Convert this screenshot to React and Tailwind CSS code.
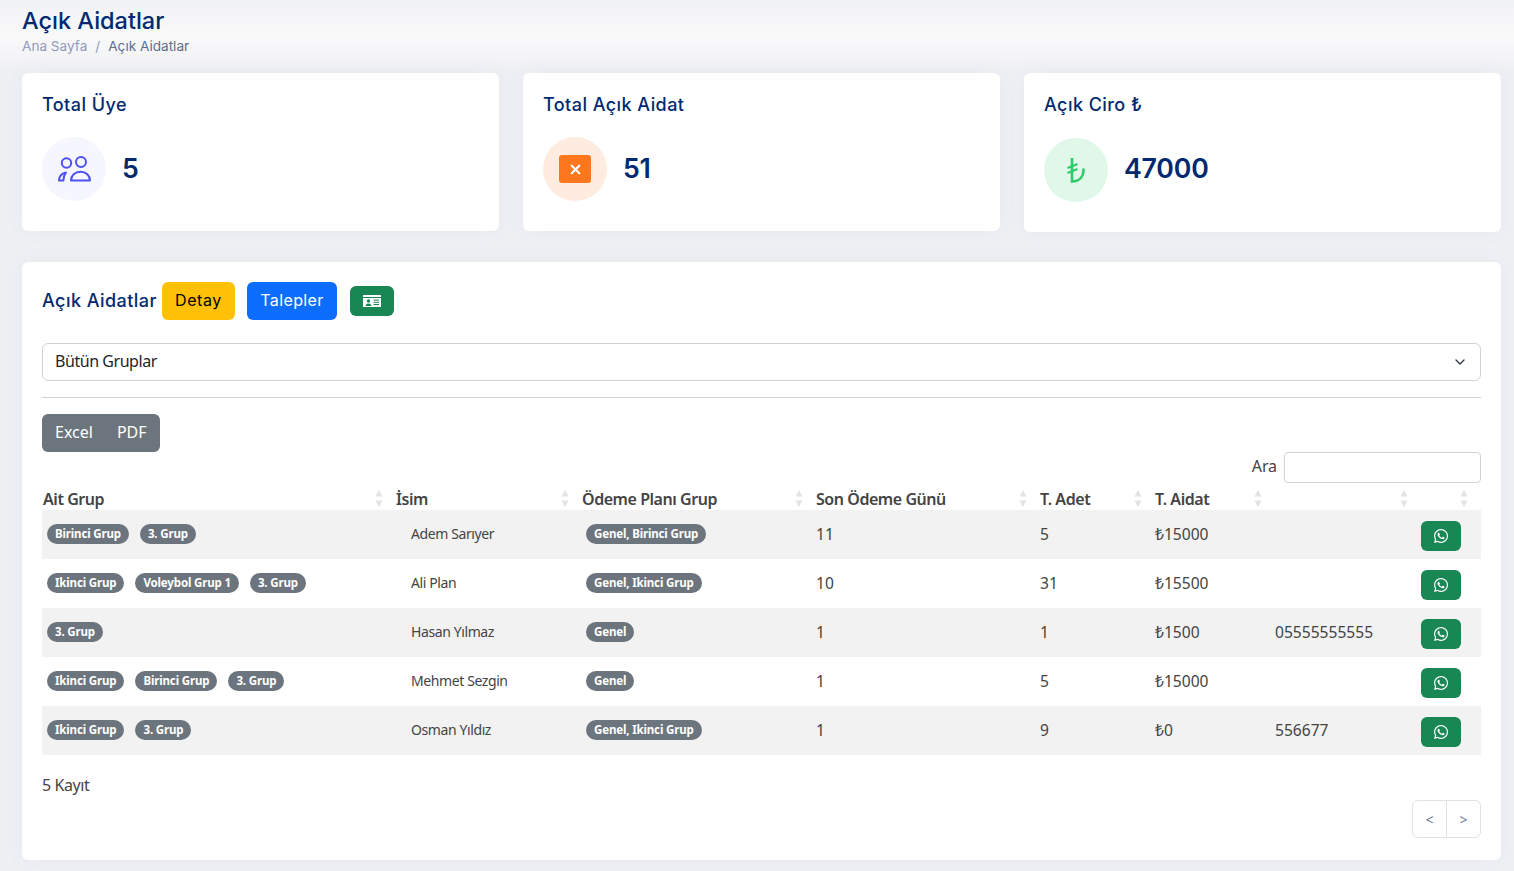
import { X, ChevronDown } from "lucide-react";
import { FaWhatsapp } from "react-icons/fa";

const rows = [
  { groups: ["Birinci Grup", "3. Grup"], name: "Adem Sarıyer", plan: "Genel, Birinci Grup", day: "11", count: "5", total: "₺15000", phone: "" },
  { groups: ["Ikinci Grup", "Voleybol Grup 1", "3. Grup"], name: "Ali Plan", plan: "Genel, Ikinci Grup", day: "10", count: "31", total: "₺15500", phone: "" },
  { groups: ["3. Grup"], name: "Hasan Yılmaz", plan: "Genel", day: "1", count: "1", total: "₺1500", phone: "05555555555" },
  { groups: ["Ikinci Grup", "Birinci Grup", "3. Grup"], name: "Mehmet Sezgin", plan: "Genel", day: "1", count: "5", total: "₺15000", phone: "" },
  { groups: ["Ikinci Grup", "3. Grup"], name: "Osman Yıldız", plan: "Genel, Ikinci Grup", day: "1", count: "9", total: "₺0", phone: "556677" },
];

const columns = [
  ["Ait Grup", "w-[350px]"],
  ["İsim", "w-[186px]"],
  ["Ödeme Planı Grup", "w-[234px]"],
  ["Son Ödeme Günü", "w-[224px]"],
  ["T. Adet", "w-[115px]"],
  ["T. Aidat", "w-[120px]"],
  ["", "w-[146px]"],
  ["", "w-[64px]"],
];

function SortIcon() {
  return (
    <svg width="8" height="17" viewBox="0 0 8 17" className="shrink-0">
      <path d="M4 0 L7.5 6.5 H0.5 Z" fill="#e3e3e3" />
      <path d="M4 17 L7.5 10.5 H0.5 Z" fill="#e3e3e3" />
    </svg>
  );
}

function UsersIcon() {
  return (
    <svg width="33" height="26" viewBox="0 0 33 26" fill="none" stroke="#4d50f5" strokeWidth="2">
      <circle cx="8.5" cy="7" r="4.7" />
      <circle cx="23" cy="6" r="5" />
      <path d="M1 24.5c0-4 2.8-7 7-8-1.6 2-2.6 5-2.6 8z" strokeLinejoin="round" />
      <path d="M13 24.5c0-5 4-8.8 9.5-8.8s9.5 3.8 9.5 8.8z" strokeLinejoin="round" />
    </svg>
  );
}

function LiraIcon() {
  return (
    <svg width="18" height="25" viewBox="0 0 18 25" fill="none" stroke="#2eca6a" strokeWidth="2.6" className="mt-px">
      <path d="M5 0.5V23.5c5.5 0 11.5-3 11.5-12" strokeLinecap="round" />
      <path d="M0.5 10L10.5 6M0.5 15L10.5 11" strokeWidth="2.2" />
    </svg>
  );
}

function CardIcon() {
  return (
    <svg width="18" height="12" viewBox="0 0 18 12">
      <rect width="18" height="12" fill="#fff" />
      <rect y="2" width="18" height="1" fill="#198754" />
      <circle cx="5.5" cy="6" r="1.7" fill="#198754" />
      <path d="M2.5 11c0-1.8 1.3-2.6 3-2.6s3 .8 3 2.6z" fill="#198754" />
      <rect x="10.5" y="4.6" width="5.5" height="1" fill="#198754" />
      <rect x="10.5" y="6.8" width="5.5" height="1" fill="#198754" />
      <rect x="10.5" y="9" width="5.5" height="1" fill="#198754" />
    </svg>
  );
}

function StatCard({ title, value, circle, children, tall }) {
  return (
    <div className={`rounded-md bg-white px-5 shadow-[0_0_20px_rgba(90,100,140,0.06)] ${tall ? "h-[159px]" : "h-[158px]"}`}>
      <h3 className="mt-[19px] h-[25px] font-['Inter',sans-serif] text-[18px] font-medium leading-[26px] tracking-[0.45px] text-[#012970]">{title}</h3>
      <div className={`flex items-center gap-4 ${tall ? "mt-[21px]" : "mt-[20px]"}`}>
        <div className={`grid h-16 w-16 place-items-center rounded-full ${circle}`}>{children}</div>
        <span className={`font-['Inter',sans-serif] text-[26.7px] font-semibold leading-none tracking-[-0.2px] text-[#012970] ${tall ? "mb-[4px]" : "mb-[2px]"}`}>{value}</span>
      </div>
    </div>
  );
}

function Badge({ children }) {
  return (
    <span className="inline-block rounded-full bg-[#6c757d] px-2 py-[3px] text-[11.5px] font-bold leading-[14px] tracking-[-0.15px] text-white">
      {children}
    </span>
  );
}

export default function App() {
  return (
    <div className="min-h-screen bg-[#eff0f4] font-['Noto_Sans',sans-serif] text-[#444444]">
      <header className="h-[73px] bg-gradient-to-b from-[#f1f2f4] via-[#f9f9fa] to-[#eff0f4] pl-[22px] pt-[7px]">
        <h1 className="font-['Inter',sans-serif] text-[23.5px] font-medium leading-[28px] text-[#012970]">Açık Aidatlar</h1>
        <div className="mt-px flex gap-2 font-['Inter',sans-serif] text-[13.6px] leading-[20px]">
          <span className="text-[#8f9bb9]">Ana Sayfa</span>
          <span className="text-[#8f9bb9]">/</span>
          <span className="text-[#5f6e8f]">Açık Aidatlar</span>
        </div>
      </header>

      <main className="pl-[22px] pr-[13px] pb-[11px]">
        <div className="grid grid-cols-3 items-start gap-6">
          <StatCard title="Total Üye" value="5" circle="bg-[#f6f6fe]">
            <UsersIcon />
          </StatCard>
          <StatCard title="Total Açık Aidat" value="51" circle="bg-[#ffece0]">
            <div className="grid h-7 w-8 place-items-center rounded-[3px] bg-[#ff771d]">
              <X size={15} strokeWidth={3.4} className="text-[#fff]" />
            </div>
          </StatCard>
          <StatCard title="Açık Ciro ₺" value="47000" circle="bg-[#e0f8e9]" tall>
            <LiraIcon />
          </StatCard>
        </div>

        <section className="mt-[30px] h-[598px] rounded-md bg-white px-5 pt-5 shadow-[0_0_20px_rgba(90,100,140,0.06)]">
          <div className="flex h-[38px] items-center">
            <h2 className="mb-[2px] w-[120px] font-['Inter',sans-serif] text-[18px] font-medium tracking-[0.45px] text-[#012970]">Açık Aidatlar</h2>
            <button className="h-[38px] w-[73px] rounded-md bg-[#ffc107] pb-[2px] font-['Inter',sans-serif] text-[16px] tracking-[0.6px] text-black">Detay</button>
            <button className="ml-3 h-[38px] w-[90px] rounded-md bg-[#0d6efd] pb-[2px] font-['Inter',sans-serif] text-[16px] tracking-[0.4px] text-white">Talepler</button>
            <button className="ml-[13px] grid h-[30px] w-[44px] place-items-center rounded-md bg-[#198754] text-white">
              <CardIcon />
            </button>
          </div>

          <div className="mt-[23px] flex h-[38px] items-center justify-between rounded-md border border-[#ced4da] pl-3 pr-3 text-[16px] text-[#212529]">
            <span className="mb-[2px] tracking-[-0.45px]">Bütün Gruplar</span>
            <ChevronDown size={16} strokeWidth={2} className="text-[#343a40]" />
          </div>

          <hr className="mt-4 border-t border-[#d3d3d3]" />

          <div className="mt-4 flex h-[38px] w-[118px] items-center rounded-md bg-[#6c757d] pb-[2px] pl-[13px] text-[16px] text-white">
            <span>Excel</span>
            <span className="ml-6">PDF</span>
          </div>

          <div className="flex h-[31px] items-center justify-end">
            <span className="mb-[3px] mr-[7px] text-[16px] tracking-[-0.1px] text-[#444444]">Ara</span>
            <div className="h-[31px] w-[197px] rounded-[4px] border border-[#ced4da] bg-white" />
          </div>

          <table className="w-full table-fixed border-collapse">
            <colgroup>
              {columns.map(([, width], i) => <col key={i} className={width} />)}
            </colgroup>
            <thead>
              <tr className="h-[27px]">
                {columns.map(([label], i) => (
                  <th key={i} className="px-0 text-left align-bottom text-[16px] font-semibold leading-[24px] text-[#444444]">
                    <div className={`flex h-[27px] items-center justify-between pt-1 tracking-[-0.45px] ${i === 0 ? "pl-px" : "pl-1"} ${i === 7 ? "pr-[13px]" : "pr-[9px]"}`}>
                      <span>{label}</span>
                      <SortIcon />
                    </div>
                  </th>
                ))}
              </tr>
            </thead>
            <tbody>
              {rows.map((row, i) => (
                <tr key={row.name} className={`h-[49px] text-[15.6px] ${i % 2 === 0 ? "bg-[#f2f2f2]" : "bg-white"}`}>
                  <td className="pl-[5px] pb-px">
                    <div className="flex gap-[11px]">
                      {row.groups.map((g) => <Badge key={g}>{g}</Badge>)}
                    </div>
                  </td>
                  <td className="pb-[2px] pl-[19px] text-[14px] tracking-[-0.4px]">{row.name}</td>
                  <td className="pl-2 pb-[3px]"><Badge>{row.plan}</Badge></td>
                  <td className="pl-1">{row.day}</td>
                  <td className="pl-1">{row.count}</td>
                  <td className="pl-1">{row.total}</td>
                  <td className="pl-1">{row.phone}</td>
                  <td className="pl-1 pt-[2px]">
                    <button className="grid h-[30px] w-10 place-items-center rounded-md bg-[#198754] text-white">
                      <FaWhatsapp size={16} />
                    </button>
                  </td>
                </tr>
              ))}
            </tbody>
          </table>

          <div className="mt-[18px] text-[16px] leading-[24px] tracking-[-0.4px] text-[#444444]">5 Kayıt</div>

          <div className="mt-[3px] flex justify-end">
            <div className="flex h-[38px] w-[69px] rounded-md border border-[#dee2e6] text-[14px] text-[#6c7a99]">
              <span className="grid w-[34px] place-items-center border-r border-[#dee2e6]">&lt;</span>
              <span className="grid flex-1 place-items-center">&gt;</span>
            </div>
          </div>
        </section>
      </main>
    </div>
  );
}
